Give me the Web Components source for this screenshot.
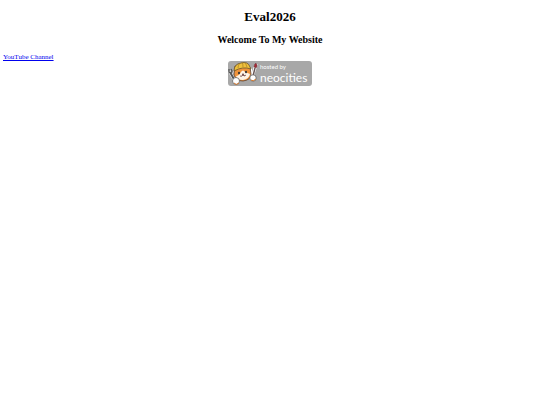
<!DOCTYPE html>
<html lang="en">
<head>
<meta charset="utf-8">
<title>Eval2026</title>
<style>
  body {
    margin: 0;
    background: #fff;
    color: #000;
    font-family: "Liberation Serif", "Times New Roman", serif;
  }
</style>
</head>
<body>
<home-page>
  <page-title slot="title">Eval2026</page-title>
  <page-subtitle slot="subtitle">Welcome To My Website</page-subtitle>
  <text-link href="#youtube">YouTube Channel</text-link>
  <host-badge slot="badge" href="#neocities"></host-badge>
</home-page>

<template id="home-page">
  <style>
    :host {
      display: block;
      padding: 9px 3px;
    }
    header {
      text-align: center;
    }
    nav {
      margin-top: 7px;
    }
    footer {
      display: flex;
      justify-content: center;
    }
  </style>
  <header>
    <slot name="title"></slot>
    <slot name="subtitle"></slot>
  </header>
  <nav><slot></slot></nav>
  <footer><slot name="badge"></slot></footer>
</template>

<template id="page-title">
  <style>
    :host { display: block; }
    h1 {
      margin: 0;
      font-size: 13px;
      line-height: 16px;
    }
  </style>
  <h1><slot></slot></h1>
</template>

<template id="page-subtitle">
  <style>
    :host { display: block; margin-top: 9px; }
    h2 {
      margin: 0;
      font-size: 10px;
      line-height: 12px;
    }
  </style>
  <h2><slot></slot></h2>
</template>

<template id="text-link">
  <style>
    :host { display: block; font-size: 7px; line-height: 8px; }
    a { color: #0000ee; text-decoration: underline; }
  </style>
  <a><slot></slot></a>
</template>

<template id="host-badge">
  <style>
    :host { display: block; }
    a {
      display: flex;
      align-items: center;
      width: 84px;
      height: 25px;
      box-sizing: border-box;
      border-radius: 3px;
      background: #a8a8a8;
      color: #fff;
      font-family: Lato, "Noto Sans", sans-serif;
      text-decoration: none;
      overflow: hidden;
    }
    svg { flex: none; width: 32px; height: 25px; }
    .words { display: flex; flex-direction: column; }
    .small { font-size: 6px; line-height: 8px; }
    .name { font-size: 12px; line-height: 13px; }
  </style>
  <a>
    <!-- cat in a hard hat, wrench in one paw and brush in the other -->
    <svg viewBox="0 0 32 25" aria-hidden="true">
      <g stroke="#fff" stroke-width="3" stroke-linecap="round" stroke-linejoin="round" fill="#fff">
        <path d="M2 11 7 20M28 4 25 13"/>
        <ellipse cx="15" cy="11" rx="8" ry="7"/>
      </g>
      <path d="M2 11 7 20" stroke="#555" stroke-width="2"/>
      <path d="M1 8v3l2 1 1-2-1-2" fill="none" stroke="#555" stroke-width="1.3"/>
      <path d="M27 7 25 15" stroke="#655" stroke-width="1.4"/>
      <path d="M26 6Q26 3 28 2Q30 5 28 7z" fill="#a22937" stroke="#633" stroke-width=".5"/>
      <path d="M7 5 6 14Q8 20 15 20Q23 19 23 13L22 6z" fill="#f0933a" stroke="#5d4030" stroke-width=".8"/>
      <path d="M13 11Q15 8 17 11L22 13Q21 18 15 19Q9 19 8 15Q11 15 13 11z" fill="#fff4e5"/>
      <path d="M6 10Q6 3 13 2Q20 0 22 6L23 8Q15 5 6 10z" fill="#efc13c" stroke="#665029" stroke-width=".8"/>
      <path d="M10 7Q10 4 12 2M15 6Q15 3 14 1M19 6Q18 3 17 2" fill="none" stroke="#a77d20" stroke-width=".7"/>
      <ellipse cx="11" cy="12" rx="1" ry="1.3" fill="#333"/>
      <ellipse cx="18" cy="11" rx="1" ry="1.3" fill="#333"/>
      <path d="M14 13h2l-1 1zM12 15Q14 16 15 14Q16 16 18 14" fill="#733" stroke="#644" stroke-width=".6"/>
      <circle cx="8" cy="20" r="3.5" fill="#fff" stroke="#555" stroke-width=".7"/>
      <circle cx="25" cy="17" r="3.2" fill="#fff" stroke="#555" stroke-width=".7"/>
      <path d="M6 22Q8 25 11 22M23 19Q25 21 28 18" fill="none" stroke="#d57b30"/>
    </svg>
    <span class="words">
      <span class="small">hosted by</span>
      <span class="name">neocities</span>
    </span>
  </a>
</template>

<script>
class TemplateElement extends HTMLElement {
  constructor() {
    super();
    const template = document.getElementById(this.localName);
    this.attachShadow({ mode: "open" });
    this.shadowRoot.appendChild(template.content.cloneNode(true));
  }
}

class LinkElement extends TemplateElement {
  connectedCallback() {
    this.shadowRoot.querySelector("a").href = this.getAttribute("href");
  }
}

customElements.define("home-page", class extends TemplateElement {});
customElements.define("page-title", class extends TemplateElement {});
customElements.define("page-subtitle", class extends TemplateElement {});
customElements.define("text-link", class extends LinkElement {});
customElements.define("host-badge", class extends LinkElement {});
</script>
</body>
</html>
